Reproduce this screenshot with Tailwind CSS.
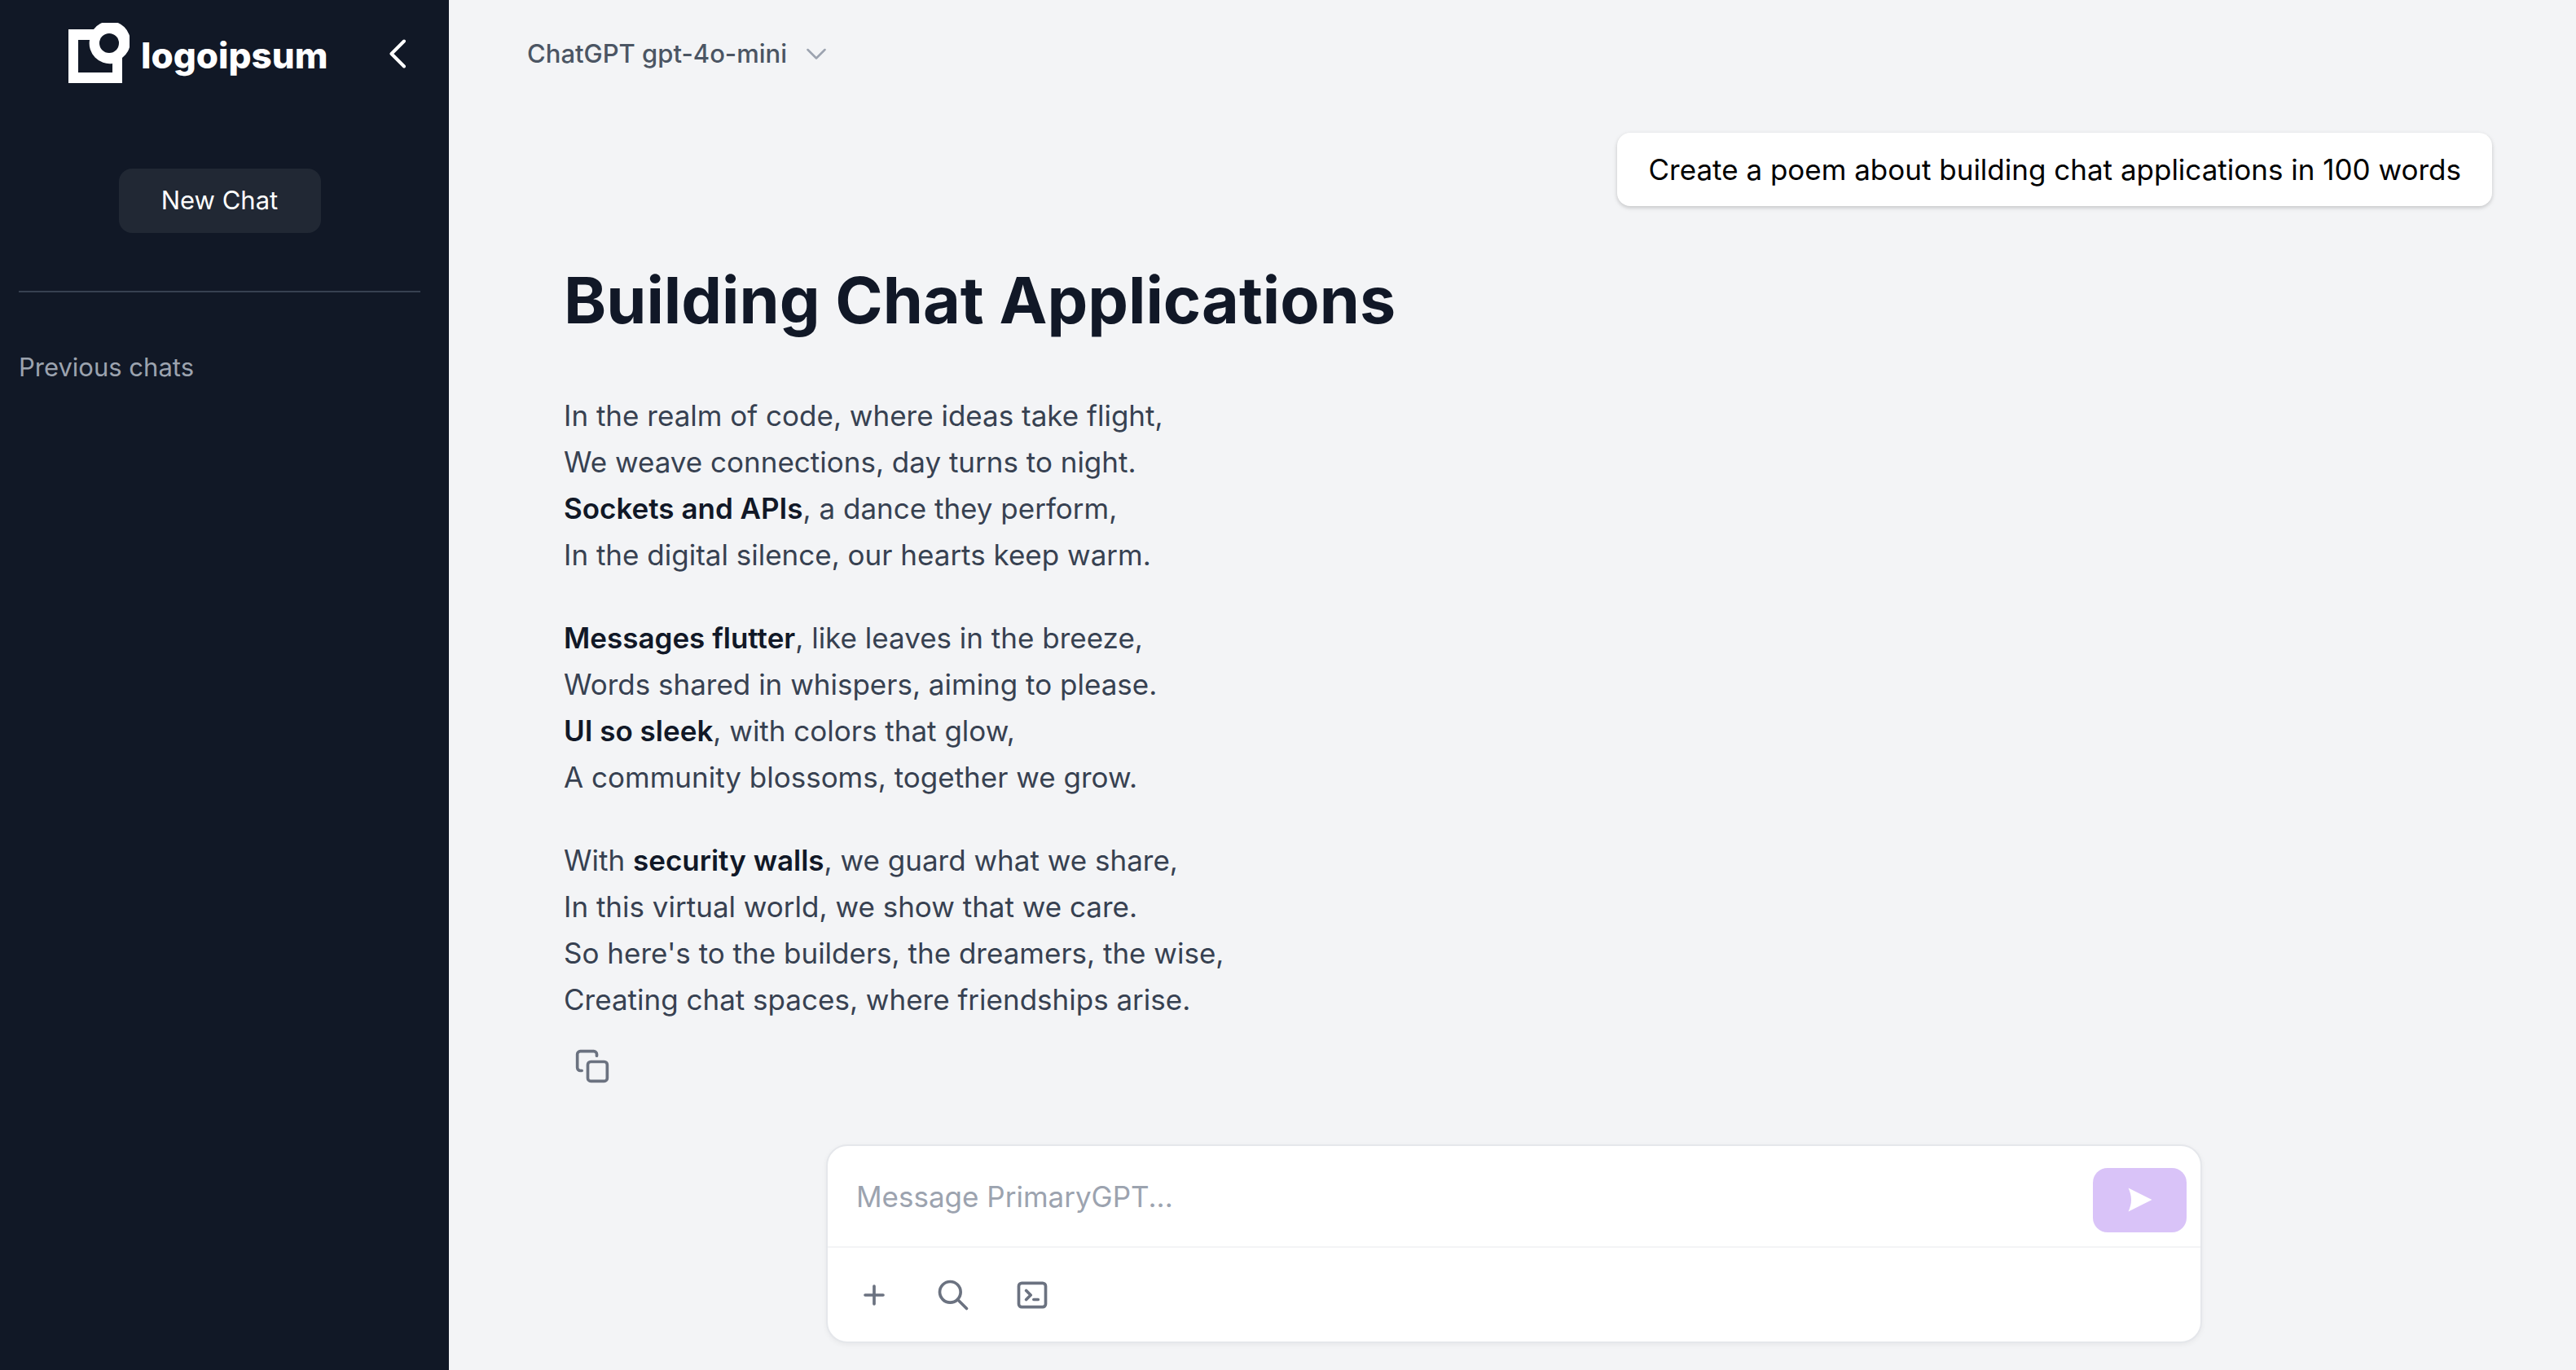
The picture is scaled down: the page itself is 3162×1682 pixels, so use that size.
<!DOCTYPE html>
<html lang="en">
<head>
<meta charset="utf-8">
<meta name="viewport" content="width=device-width, initial-scale=1">
<title>PrimaryGPT</title>
<script src="https://cdn.jsdelivr.net/npm/@tailwindcss/browser@4"></script>
</head>
<body class="flex min-h-screen bg-[#f3f4f6] font-['Inter',sans-serif] text-[31px]">
  <aside class="flex w-[551px] shrink-0 flex-col bg-[#111826] pl-[23px] pr-[35px]">
    <div class="flex h-[132px] items-center justify-between pl-[61px] pr-[18px]">
      <a href="#" class="flex items-center gap-[14px] text-white" aria-label="logoipsum">
        <svg class="h-[76px] w-[75px]" viewBox="0 0 75 76" fill="none" aria-hidden="true">
          <path fill="currentColor" fill-rule="evenodd" d="M0 8H31A25 25 0 1 1 66 43V74H0ZM12 21V61H54V50A25 25 0 0 1 26 21Z"/>
          <circle cx="50" cy="25" r="12" fill="#111826"/>
        </svg>
        <span class="pt-[3px] text-[44px] leading-[60px] font-extrabold">logoipsum</span>
      </a>
      <button type="button" aria-label="Collapse sidebar" class="text-white">
        <svg class="h-9 w-5" viewBox="0 0 20 36" fill="none" stroke="currentColor" stroke-width="4" stroke-linecap="round" stroke-linejoin="round"><path d="M18 2.500L2.500 18L18 33.500"/></svg>
      </button>
    </div>
    <button type="button" class="mt-[75px] h-[79px] w-[248px] self-center rounded-2xl bg-[#212834] text-white">New Chat</button>
    <hr class="mt-[71px] border-t-2 border-[#374151]">
    <h2 class="mt-[68px] leading-12 text-[#9ca3af]">Previous chats</h2>
  </aside>

  <main class="flex min-w-0 flex-1 flex-col">
    <header class="flex h-[132px] shrink-0 items-center pl-24">
      <button type="button" class="flex items-center gap-6 font-medium text-[#4b5563]">
        ChatGPT gpt-4o-mini
        <svg class="h-4 w-6 text-[#9ca3af]" viewBox="0 0 24 16" fill="none" stroke="currentColor" stroke-width="2.500" stroke-linecap="round" stroke-linejoin="round" aria-hidden="true"><path d="M1.500 3L12 13.500L22.500 3"/></svg>
      </button>
    </header>

    <section class="flex flex-1 flex-col pt-[31px] pr-[103px] pl-[141px]">
      <p class="self-end rounded-2xl bg-white px-[38px] py-[18px] text-[35px] leading-[54px] text-black shadow-[0_2px_6px_rgba(0,0,0,0.1),0_2px_4px_rgba(0,0,0,0.1)]">Create a poem about building chat applications in 100 words</p>
      <article class="mt-[70px] text-[35px] leading-[57px] text-[#374151]">
        <h1 class="text-[79px] leading-[90px] font-bold text-[#111827]">Building Chat Applications</h1>
        <p class="mt-[69px]">In the realm of code, where ideas take flight,<br>We weave connections, day turns to night.<br><strong class="font-semibold text-[#111827]">Sockets and APIs</strong>, a dance they perform,<br>In the digital silence, our hearts keep warm.</p>
        <p class="mt-[45px]"><strong class="font-semibold text-[#111827]">Messages flutter</strong>, like leaves in the breeze,<br>Words shared in whispers, aiming to please.<br><strong class="font-semibold text-[#111827]">UI so sleek</strong>, with colors that glow,<br>A community blossoms, together we grow.</p>
        <p class="mt-[45px]">With <strong class="font-semibold text-[#111827]">security walls</strong>, we guard what we share,<br>In this virtual world, we show that we care.<br>So here's to the builders, the dreamers, the wise,<br>Creating chat spaces, where friendships arise.</p>
      </article>
      <button type="button" aria-label="Copy" class="mt-[31px] ml-[13px] self-start text-[#6b7280]">
        <svg class="size-11" viewBox="0 0 24 24" fill="none" stroke="currentColor" stroke-width="2" stroke-linecap="round" stroke-linejoin="round"><rect x="9" y="9" width="13" height="13" rx="2"/><path d="M5 15H4a2 2 0 0 1-2-2V4a2 2 0 0 1 2-2h9a2 2 0 0 1 2 2v1"/></svg>
      </button>
    </section>

    <form class="shrink-0 px-8 pb-[33px] pl-9" onsubmit="return false">
      <div class="mx-auto max-w-[1689px] rounded-[26px] border-2 border-[#e5e7eb] bg-white shadow-[0_2px_6px_rgba(0,0,0,0.05)]">
        <div class="flex h-[125px] items-center border-b-2 border-[#f3f4f6] pr-[17px] pl-[35px]">
          <input type="text" aria-label="Message" placeholder="Message PrimaryGPT..." class="min-w-0 flex-1 text-[35px] leading-[54px] outline-none placeholder:text-[#9ca3af]">
          <button type="submit" aria-label="Send" class="mt-[9px] flex h-[79px] w-[115px] items-center justify-center rounded-[18px] bg-[#d9c3f8] text-white">
            <svg class="size-[30px]" viewBox="0 0 30 30" fill="currentColor"><path d="M0.500 0.500L29.500 15L0.500 29.500Q4 22 4 15Q4 8 0.500 0.500Z"/></svg>
          </button>
        </div>
        <div class="flex h-[115px] items-center gap-[53px] pl-[35px] text-[#6b7280]">
          <button type="button" aria-label="Add">
            <svg class="size-11" viewBox="0 0 24 24" fill="none" stroke="currentColor" stroke-width="2" stroke-linecap="round"><path d="M12 6v12M6 12h12"/></svg>
          </button>
          <button type="button" aria-label="Search">
            <svg class="size-11" viewBox="0 0 24 24" fill="none" stroke="currentColor" stroke-width="2" stroke-linecap="round"><circle cx="10" cy="10" r="7"/><path d="M21 21l-6-6"/></svg>
          </button>
          <button type="button" aria-label="Code">
            <svg class="size-11" viewBox="0 0 24 24" fill="none" stroke="currentColor" stroke-width="2" stroke-linecap="round" stroke-linejoin="round"><path d="M8 9l3 3l-3 3M13 15h3"/><rect x="3" y="4" width="18" height="16" rx="2"/></svg>
          </button>
        </div>
      </div>
    </form>
  </main>
</body>
</html>
